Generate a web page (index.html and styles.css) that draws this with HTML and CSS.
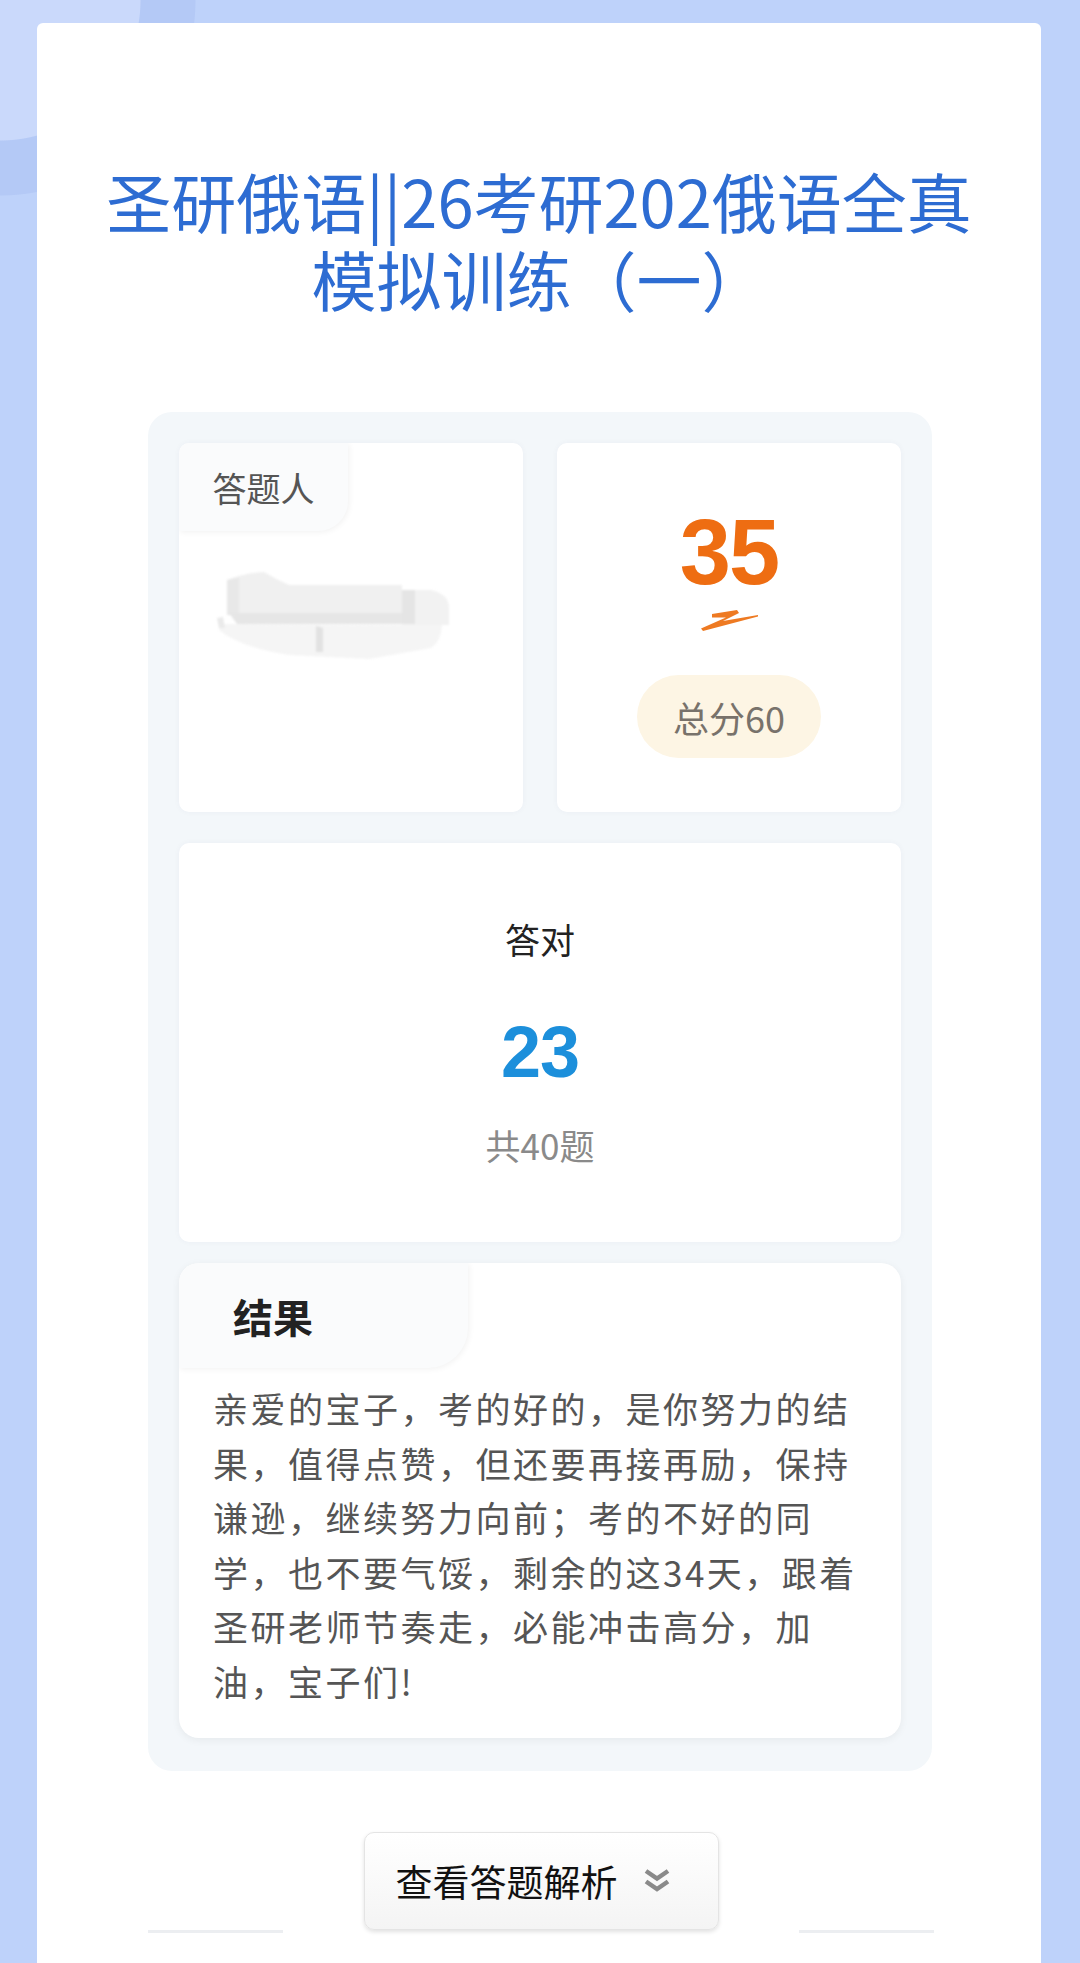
FILE: index.html
```html
<!DOCTYPE html>
<html lang="zh-CN">
<head>
<meta charset="utf-8">
<title>圣研俄语 模拟训练</title>
<link rel="stylesheet" href="styles.css">
</head>
<body>
<div class="page">
  <div class="sheet">
    <h1 class="title">圣研俄语||26考研202俄语全真模拟训练（一）</h1>

    <section class="panel">
      <div class="row">
        <div class="box who">
          <div class="tab">答题人</div>
          <svg class="blur" width="233" height="87" viewBox="47 30 233 87" aria-hidden="true">
            <path d="M58 38 Q76 31 95 30 Q108 38 120 43 L233 43 L233 72 L58 72 Z" fill="#f0f0f0"/>
            <path d="M58 38 L70 36 L70 73 L58 73 Z" fill="#e8e8e8"/>
            <path d="M60 71 L233 71 L240 82 L68 82 Z" fill="#e6e6e6"/>
            <path d="M233 48 L262 48 Q280 52 280 66 L280 83 L233 83 Z" fill="#f2f2f2"/>
            <path d="M233 48 L246 48 L246 82 L233 82 Z" fill="#e5e5e5"/>
            <path d="M50 82 L273 83 Q272 100 262 106 L200 117 L120 113 Q70 105 50 88 Z" fill="#f5f5f5"/>
            <path d="M147 84 L154 86 L154 110 L147 110 Z" fill="#e2e2e2"/>
            <path d="M48 76 L54 75 L56 86 L50 86 Z" fill="#eaeaea"/>
          </svg>
        </div>
        <div class="box score">
          <div class="score-num">35</div>
          <svg class="mark" width="60" height="24" viewBox="0 0 60 24" aria-hidden="true">
            <path d="M13 5 L38 1 L40 4 L24 12 L59 6 L59 7.5 L4 22 L2 19.5 L27 8.5 L13 8.5 Z" fill="#ee7a22"/>
          </svg>
          <div class="total">总分60</div>
        </div>
      </div>

      <div class="box correct">
        <div class="label">答对</div>
        <div class="num">23</div>
        <div class="sub">共40题</div>
      </div>

      <div class="box result">
        <div class="tab tab-lg">结果</div>
        <p class="result-text">亲爱的宝子，考的好的，是你努力的结果，值得点赞，但还要再接再励，保持谦逊，继续努力向前；考的不好的同学，也不要气馁，剩余的这34天，跟着圣研老师节奏走，必能冲击高分，加油，宝子们!</p>
      </div>
    </section>

    <div class="actions">
      <span class="rule"></span>
      <button class="btn" type="button">
        <span>查看答题解析</span>
        <svg width="26" height="26" viewBox="0 0 26 26" aria-hidden="true">
          <polyline points="2,3 13,10.5 24,3" fill="none" stroke="#8a8a8a" stroke-width="4.5"/>
          <polyline points="2,13.5 13,21 24,13.5" fill="none" stroke="#8a8a8a" stroke-width="4.5"/>
        </svg>
      </button>
      <span class="rule"></span>
    </div>
  </div>
</div>
</body>
</html>
```

FILE: styles.css
```css
html, body {
  margin: 0;
  height: 1963px;
  overflow: hidden;
}

body {
  font-family: "Noto Sans CJK SC", "Noto Sans", sans-serif;
  background:
    radial-gradient(circle at 0 0, #cad9fb 0 140px, #b4c9f6 141px 195px, transparent 196px),
    #bed2fa;
}

.page {
  padding: 23px 39px 0 37px;
}

.sheet {
  background: #ffffff;
  border-radius: 6px 6px 0 0;
  min-height: 1940px;
  padding-top: 138px;
  box-sizing: border-box;
}

.title {
  margin: 0;
  padding: 0 60px;
  text-align: center;
  font-size: 65px;
  line-height: 78px;
  font-weight: 400;
  color: #2d6cd2;
}

.panel {
  margin: 95px 109px 0 111px;
  padding: 31px 31px 33px;
  background: #f3f7fa;
  border-radius: 24px;
  display: flex;
  flex-direction: column;
}

.row {
  display: grid;
  grid-template-columns: 1fr 1fr;
  gap: 34px;
  height: 369px;
}

.box {
  background: #ffffff;
  border-radius: 10px;
  box-shadow: 0 0 6px rgba(40, 60, 90, 0.04);
}

.who {
  overflow: hidden;
}

.tab {
  width: 169px;
  height: 88px;
  display: flex;
  align-items: center;
  justify-content: center;
  background: #fafbfc;
  border-bottom-right-radius: 30px;
  box-shadow: 1px 1px 6px rgba(0, 0, 0, 0.06);
  font-size: 34px;
  color: #555555;
}

.blur {
  display: block;
  margin: 41px 0 0 37px;
  filter: blur(0.8px);
}

.score {
  display: flex;
  flex-direction: column;
  align-items: center;
  padding-top: 63px;
  box-sizing: border-box;
}

.score-num {
  font-family: "Liberation Sans", Arial, sans-serif;
  font-weight: 700;
  font-size: 92px;
  line-height: 92px;
  letter-spacing: -2px;
  color: #ee6d12;
}

.mark {
  display: block;
  margin-top: 11px;
}

.total {
  margin-top: 42px;
  width: 184px;
  height: 83px;
  border-radius: 42px;
  background: #fdf5e4;
  display: flex;
  align-items: center;
  justify-content: center;
  font-size: 36px;
  color: #78726b;
}

.correct {
  margin-top: 31px;
  height: 399px;
  box-sizing: border-box;
  padding-top: 71px;
  display: flex;
  flex-direction: column;
  align-items: center;
}

.label {
  font-size: 35px;
  line-height: 50px;
  color: #222222;
}

.num {
  margin-top: 49px;
  font-family: "Liberation Sans", Arial, sans-serif;
  font-weight: 700;
  font-size: 72px;
  line-height: 78px;
  letter-spacing: -1px;
  color: #1c8fdb;
}

.sub {
  margin-top: 29px;
  font-size: 35px;
  line-height: 50px;
  color: #8a8a8a;
}

.result {
  margin-top: 21px;
  border-radius: 20px;
  box-shadow: 0 2px 8px rgba(0, 0, 0, 0.06);
  overflow: hidden;
}

.tab-lg {
  width: 289px;
  height: 105px;
  justify-content: flex-start;
  padding-left: 54px;
  box-sizing: border-box;
  border-bottom-right-radius: 40px;
  font-size: 40px;
  font-weight: 700;
  color: #222222;
}

.result-text {
  margin: 13px 0 0;
  padding: 0 34px 30px;
  font-size: 35px;
  letter-spacing: 2.5px;
  line-height: 54.5px;
  color: #555555;
}

.actions {
  margin: 61px 107px 0 111px;
  display: flex;
  justify-content: space-between;
  align-items: flex-end;
}

.rule {
  width: 135px;
  height: 3px;
  background: #eceef1;
  margin-bottom: -3px;
}

.btn {
  width: 355px;
  height: 98px;
  box-sizing: border-box;
  padding: 0 0 0 31px;
  display: flex;
  align-items: center;
  gap: 26px;
  background: linear-gradient(#ffffff, #f4f4f4);
  border: 1px solid #e4e4e4;
  border-radius: 10px;
  box-shadow: 0 2px 4px rgba(0, 0, 0, 0.12);
  font-family: "Noto Sans CJK SC", "Noto Sans", sans-serif;
  font-size: 37px;
  color: #111111;
}

.btn svg {
  display: block;
}
```
